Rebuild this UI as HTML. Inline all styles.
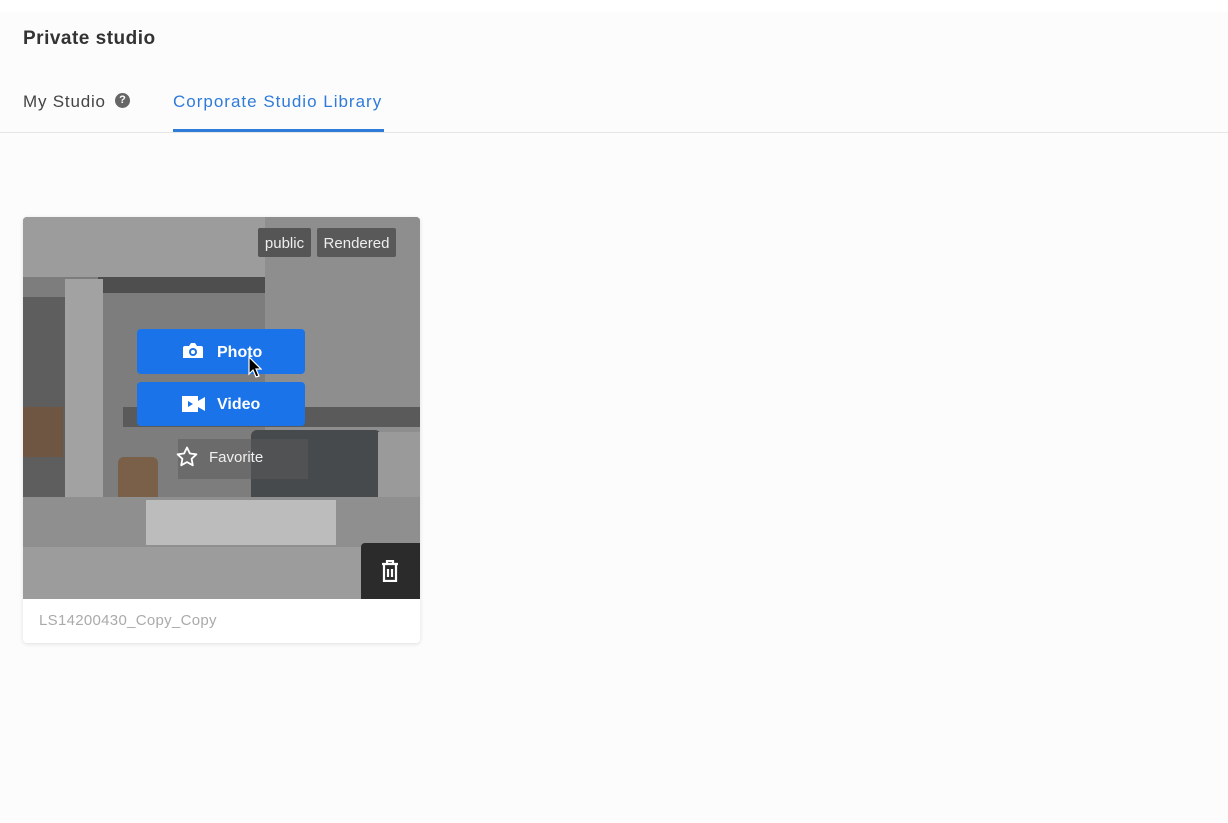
<!DOCTYPE html>
<html><head><style>
body{margin:0;width:1228px;height:823px;background:#fcfcfc;font-family:"Liberation Sans",sans-serif;position:relative;overflow:hidden}
.a{position:absolute}
</style></head><body>
<div class="a" style="left:0;top:0;width:1228px;height:12px;background:#fff"></div>
<div class="a" style="left:23px;top:28px;font-size:19px;font-weight:bold;color:#333;letter-spacing:0.5px">Private studio</div>
<div class="a" style="left:23px;top:92px;font-size:17px;color:#444;letter-spacing:0.8px">My Studio</div>
<div class="a" style="left:115px;top:93px;width:15px;height:15px;border-radius:50%;background:#666;color:#fff;font-size:11px;font-weight:bold;text-align:center;line-height:15px">?</div>
<div class="a" style="left:173px;top:92px;font-size:17px;color:#2f7bd9;letter-spacing:1px">Corporate Studio Library</div>
<div class="a" style="left:173px;top:129px;width:211px;height:3px;background:#2f7bd9"></div>
<div class="a" style="left:0;top:132px;width:1228px;height:1px;background:#e6e6e6"></div>

<div class="a" style="left:23px;top:217px;width:397px;height:426px;background:#fff;border-radius:4px;box-shadow:0 1px 4px rgba(0,0,0,.12);overflow:hidden">
 <div class="a" style="left:0;top:0;width:397px;height:382px;background:#7d7d7d;overflow:hidden">
  <div class="a" style="left:0;top:0;width:242px;height:60px;background:#9c9c9c"></div>
  <div class="a" style="left:242px;top:0;width:155px;height:240px;background:#8e8e8e"></div>
  <div class="a" style="left:75px;top:60px;width:167px;height:16px;background:#4e4e4e"></div>
  <div class="a" style="left:42px;top:62px;width:38px;height:235px;background:#a2a2a2"></div>
  <div class="a" style="left:0;top:80px;width:42px;height:200px;background:#5e5e5e"></div>
  <div class="a" style="left:0;top:190px;width:40px;height:50px;background:#6e5642"></div>
  <div class="a" style="left:100px;top:190px;width:297px;height:20px;background:#5a5a5a"></div>
  <div class="a" style="left:228px;top:213px;width:130px;height:78px;background:#474a4c;border-radius:6px"></div>
  <div class="a" style="left:355px;top:215px;width:42px;height:70px;background:#9a9a9a"></div>
  <div class="a" style="left:95px;top:240px;width:40px;height:48px;background:#7a6048;border-radius:6px"></div>
  <div class="a" style="left:0;top:280px;width:397px;height:102px;background:#8f8f8f"></div>
  <div class="a" style="left:0;top:330px;width:397px;height:52px;background:#9c9c9c"></div>
  <div class="a" style="left:123px;top:283px;width:190px;height:45px;background:#bcbcbc"></div>
 </div>
 <div class="a" style="left:235px;top:11px;width:53px;height:29px;background:#555;border-radius:2px;color:#eee;font-size:15px;line-height:31px;text-align:center">public</div>
 <div class="a" style="left:294px;top:11px;width:79px;height:29px;background:#595959;border-radius:2px;color:#eee;font-size:15px;line-height:31px;text-align:center">Rendered</div>
 <div class="a" style="left:114px;top:112px;width:168px;height:45px;background:#1a73e8;border-radius:4px;color:#fff;font-size:16px;font-weight:bold;line-height:47px">
  <svg class="a" style="left:46px;top:14px" width="20" height="17" viewBox="0 0 20 17"><path d="M2 3h4l2-3h4l2 3h4a2 2 0 012 2v10H0V5a2 2 0 012-2z" fill="#fff"/><circle cx="10" cy="9" r="4" fill="#1a73e8"/><circle cx="10" cy="9" r="2" fill="#fff"/></svg>
  <span class="a" style="left:80px;top:0">Photo</span></div>
 <div class="a" style="left:114px;top:165px;width:168px;height:44px;background:#1a73e8;border-radius:4px;color:#fff;font-size:16px;font-weight:bold;line-height:46px">
  <svg class="a" style="left:45px;top:14px" width="23" height="16" viewBox="0 0 23 16"><rect x="0" y="0" width="16" height="16" fill="#fff"/><path d="M16 5l7-4v14l-7-4z" fill="#fff"/><path d="M6 5l5 3-5 3z" fill="#1a73e8"/></svg>
  <span class="a" style="left:80px;top:0">Video</span></div>
 <div class="a" style="left:155px;top:222px;width:130px;height:40px;background:rgba(90,90,90,.5)"></div>
 <svg class="a" style="left:153px;top:229px" width="22" height="21" viewBox="0 0 22 21"><path d="M11 1.5l2.9 6 6.5.8-4.8 4.5 1.2 6.5L11 16.1l-5.8 3.2 1.2-6.5L1.6 8.3l6.5-.8z" fill="none" stroke="#fff" stroke-width="1.8" stroke-linejoin="round"/></svg>
 <div class="a" style="left:186px;top:232px;color:#f0f0f0;font-size:15px">Favorite</div>
 <div class="a" style="left:338px;top:326px;width:59px;height:56px;background:#2b2b2b;border-radius:4px 0 0 0">
  <svg class="a" style="left:19px;top:17px" width="20" height="22" viewBox="0 0 20 22"><path d="M2 4h16M7 4V1h6v3M4 4v17h12V4M8 9v8M12 9v8" fill="none" stroke="#fff" stroke-width="2.2"/></svg>
 </div>
 <div class="a" style="left:16px;top:395px;font-size:15px;color:#aaa;letter-spacing:0.3px">LS14200430_Copy_Copy</div>
</div>
<svg class="a" style="left:248px;top:356px" width="14" height="22" viewBox="0 0 14 22"><path d="M1 1v17l4-4 3 7 3-1-3-7h5z" fill="#000" stroke="#fff" stroke-width="1.2"/></svg>
</body></html>
